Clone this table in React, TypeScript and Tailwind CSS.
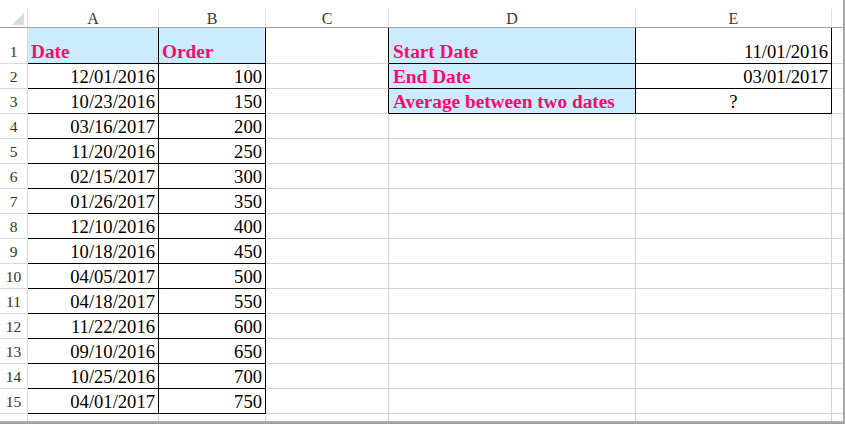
import React from "react";

const dates: [string, string][] = [
  ["12/01/2016", "100"],
  ["10/23/2016", "150"],
  ["03/16/2017", "200"],
  ["11/20/2016", "250"],
  ["02/15/2017", "300"],
  ["01/26/2017", "350"],
  ["12/10/2016", "400"],
  ["10/18/2016", "450"],
  ["04/05/2017", "500"],
  ["04/18/2017", "550"],
  ["11/22/2016", "600"],
  ["09/10/2016", "650"],
  ["10/25/2016", "700"],
  ["04/01/2017", "750"],
];

const serif = "font-['Liberation_Serif','Times_New_Roman',serif]";
const cell = "border-r border-b border-[#d4d4d4] flex items-end leading-[20px] pb-[1px] text-[18.6px] " + serif;
const boldPink = "bg-[#ccebfd] text-[#ff0a6c] font-bold text-[19.3px] ";

function RowHead({ n, h }: { n: string; h: string }) {
  return (
    <div
      className={
        "border-r border-b border-[#d9d9d9] flex items-end justify-center leading-[16px] pb-[3px] text-[15.5px] text-[#333333] " +
        serif +
        " " +
        h
      }
    >
      {n}
    </div>
  );
}

export default function App() {
  const rows: React.ReactNode[] = [];
  for (let i = 0; i < 15; i++) {
    const r = i + 1;
    const h = r === 1 ? "h-[36px]" : "h-[25px]";
    const isHead = r === 1;
    const a = isHead ? "Date" : dates[i - 1][0];
    const b = isHead ? "Order" : dates[i - 1][1];
    const inDE = r <= 3;
    rows.push(
      <div key={r} className="flex">
        <RowHead n={String(r)} h={h + " w-[28px]"} />
        <div
          className={
            cell +
            " w-[131px] border-r-black border-b-black " +
            (isHead ? boldPink + "pl-[3px] " : "justify-end pr-[3px] text-black ") +
            h
          }
        >
          {a}
        </div>
        <div
          className={
            cell +
            " w-[107px] border-r-black border-b-black " +
            (isHead ? boldPink + "pl-[3px] " : "justify-end pr-[3px] text-black ") +
            h
          }
        >
          {b}
        </div>
        <div className={cell + " w-[123px] " + (inDE ? "border-r-black " : "") + h}></div>
        <div
          className={
            cell +
            " w-[247px] " +
            (inDE ? boldPink + "pl-[4px] border-r-black border-b-black " : "") +
            h
          }
        >
          {r === 1 ? "Start Date" : r === 2 ? "End Date" : r === 3 ? "Average between two dates" : ""}
        </div>
        <div
          className={
            cell +
            " w-[196px] " +
            (inDE ? "border-r-black border-b-black text-black " : "") +
            (r === 3 ? "justify-center " : "justify-end pr-[3px] ") +
            h
          }
        >
          {r === 1 ? "11/01/2016" : r === 2 ? "03/01/2017" : r === 3 ? "?" : ""}
        </div>
        <div className={"w-[11px] border-b border-[#d4d4d4] " + h}></div>
      </div>
    );
  }

  return (
    <div className="w-[845px] h-[424px] bg-white overflow-hidden flex">
      <div className="w-[843px] flex flex-col">
        <div className="h-[9px] shrink-0"></div>
        <div className={"flex h-[19px] shrink-0 border-b border-[#a3a3a3] text-[16px] text-[#3a3a3a] leading-[16px] " + serif}>
          <div className="w-[28px] border-r border-[#dedede] flex items-end justify-end pr-[3px] pb-[2px]">
            <svg width="12" height="12" viewBox="0 0 12 12">
              <polygon points="12,0 12,12 0,12" fill="#dcdcdc" />
            </svg>
          </div>
          <div className="w-[131px] border-r border-[#dedede] flex items-center justify-center pt-[2px]">A</div>
          <div className="w-[107px] border-r border-[#dedede] flex items-center justify-center pt-[2px]">B</div>
          <div className="w-[123px] border-r border-[#dedede] flex items-center justify-center pt-[2px]">C</div>
          <div className="w-[247px] border-r border-[#dedede] flex items-center justify-center pt-[2px]">D</div>
          <div className="w-[196px] border-r border-[#dedede] flex items-center justify-center pt-[2px]">E</div>
          <div className="w-[11px]"></div>
        </div>
        {rows}
        <div className="flex h-[7px] shrink-0 overflow-hidden">
          <div className={"w-[28px] border-r border-[#d9d9d9] text-[15.5px] text-[#333333] leading-[16px] text-center pt-[4px] " + serif}>16</div>
          <div className="w-[131px] border-r border-[#d4d4d4]"></div>
          <div className="w-[107px] border-r border-[#d4d4d4]"></div>
          <div className="w-[123px] border-r border-[#d4d4d4]"></div>
          <div className="w-[247px] border-r border-[#d4d4d4]"></div>
          <div className="w-[196px] border-r border-[#d4d4d4]"></div>
          <div className="w-[11px]"></div>
        </div>
        <div className="h-[3px] shrink-0 bg-gradient-to-b from-[#b4b4b4] to-[#9a9a9a]"></div>
      </div>
      <div className="w-[2px] h-full bg-[#a6a6a6]"></div>
    </div>
  );
}
